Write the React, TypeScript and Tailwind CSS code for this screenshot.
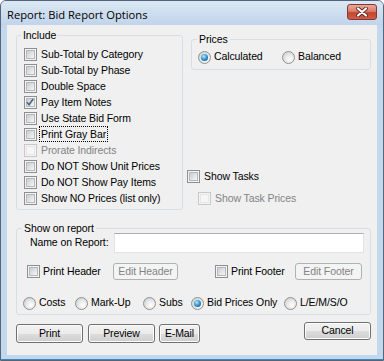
import type { ReactNode } from 'react';

function CheckBox({ checked, disabled }: { checked?: boolean; disabled?: boolean }) {
  return (
    <span
      className={`relative flex h-[13px] w-[13px] shrink-0 items-center justify-center border p-[1px] ${
        disabled ? 'border-[#c6c8ca] bg-[#f4f4f4]' : 'border-[#8e8f8f] bg-[#f4f4f4]'
      }`}
    >
      <span
        className={`h-[9px] w-[9px] border ${
          disabled
            ? 'border-[#e6e6e6] bg-[#f6f6f6]'
            : 'border-[#b4b8bd] bg-gradient-to-br from-[#c9cdd2] to-[#f6f6f6]'
        }`}
      />
      {checked && (
        <svg viewBox="0 0 13 13" className="absolute top-0 left-0 h-[11px] w-[11px]">
          <path d="M2.3 6.3 L4.8 9.2 L9.6 2.4" fill="none" stroke="#4b5f86" strokeWidth="1.8" />
        </svg>
      )}
    </span>
  );
}

function Radio({ checked }: { checked?: boolean }) {
  return (
    <span className="flex h-[13px] w-[13px] shrink-0 items-center justify-center rounded-full border border-[#8f9193] bg-[radial-gradient(circle_at_62%_65%,#ffffff_0%,#e8e8e8_45%,#c3c6ca_100%)]">
      {checked && (
        <span className="h-[7px] w-[7px] rounded-full bg-[radial-gradient(circle_at_40%_35%,#b9ecff_0%,#3a9ad6_45%,#0d3f6e_100%)]" />
      )}
    </span>
  );
}

function Check({
  label,
  checked,
  disabled,
  focus,
  className = '',
}: {
  label: string;
  checked?: boolean;
  disabled?: boolean;
  focus?: boolean;
  className?: string;
}) {
  return (
    <div className={`flex h-[16px] items-center ${className}`}>
      <CheckBox checked={checked} disabled={disabled} />
      <span
        className={`ml-[2px] whitespace-nowrap border px-[1px] leading-[14px] ${
          focus ? 'border-dotted border-black' : 'border-transparent'
        } ${disabled ? 'text-[#838383]' : ''}`}
      >
        {label}
      </span>
    </div>
  );
}

function Opt({ label, checked, className = '' }: { label: string; checked?: boolean; className?: string }) {
  return (
    <div className={`flex h-[16px] shrink-0 items-center ${className}`}>
      <Radio checked={checked} />
      <span className="ml-[3px] whitespace-nowrap">{label}</span>
    </div>
  );
}

function Button({
  children,
  disabled,
  className = '',
}: {
  children: ReactNode;
  disabled?: boolean;
  className?: string;
}) {
  return (
    <div
      className={`flex shrink-0 items-center justify-center rounded-[3px] border ${
        disabled
          ? 'border-[#adb2b5] bg-[#f4f4f4] text-[#838383]'
          : 'border-[#707070] bg-[linear-gradient(to_bottom,#f2f2f2_0%,#ebebeb_50%,#dddddd_50%,#cfcfcf_100%)] shadow-[inset_0_0_0_1px_#fcfcfc]'
      } ${className}`}
    >
      {children}
    </div>
  );
}

function Group({
  title,
  legendClass,
  className,
  children,
}: {
  title: string;
  legendClass: string;
  className: string;
  children: ReactNode;
}) {
  return (
    <fieldset className={`shrink-0 rounded-[3px] border border-[#d5dfe5] ${className}`}>
      <legend className={`px-[2px] leading-[13px] ${legendClass}`}>{title}</legend>
      {children}
    </fieldset>
  );
}

export default function App() {
  return (
    <div className="h-[361px] w-[384px] bg-white font-[family-name:Liberation_Sans,Arial,sans-serif] text-[10.5px] tracking-[-0.1px] text-black">
      <div className="flex h-[361px] w-[384px] flex-col rounded-t-[6px] border border-[#52657b] bg-[#c4d8ed]">
        {/* title bar */}
        <div className="flex h-[24px] shrink-0 items-start rounded-t-[5px] bg-gradient-to-b from-[#dce8f5] to-[#c0d4ea] pr-[6px] pl-[6px]">
          <span className="mt-[6px] font-[family-name:Open_Sans,Noto_Sans,sans-serif] text-[11.2px] leading-[16px] tracking-normal whitespace-nowrap">
            Report: Bid Report Options
          </span>
          <div className="mt-[3px] ml-auto flex h-[16px] w-[30px] items-center justify-center rounded-[3px] border border-[#86372f] bg-[linear-gradient(to_bottom,#eaa99b_0%,#d97e6c_45%,#c6462f_55%,#cf5d47_100%)]">
            <svg viewBox="0 0 14 10" className="h-[10px] w-[14px]">
              <path d="M3 1.5 L11 8.5 M11 1.5 L3 8.5" stroke="#5a2620" strokeWidth="3.8" strokeLinecap="round" />
              <path d="M3 1.5 L11 8.5 M11 1.5 L3 8.5" stroke="#ffffff" strokeWidth="2.2" strokeLinecap="round" />
            </svg>
          </div>
        </div>

        <div className="flex shrink-0 px-[6px]">
          {/* client */}
          <div className="h-[330px] w-[370px] bg-[#f0f0f0] pt-[4px]">
            <div className="flex">
              <Group
                title="Include"
                legendClass="-ml-[3px]"
                className="ml-[9px] h-[181px] w-[167px] pt-[4px] pl-[7px]"
              >
                <Check label="Sub-Total by Category" />
                <Check label="Sub-Total by Phase" />
                <Check label="Double Space" />
                <Check label="Pay Item Notes" checked />
                <Check label="Use State Bid Form" />
                <Check label="Print Gray Bar" focus />
                <Check label="Prorate Indirects" disabled />
                <Check label="Do NOT Show Unit Prices" />
                <Check label="Do NOT Show Pay Items" />
                <Check label="Show NO Prices (list only)" />
              </Group>

              <div className="ml-[4px] flex flex-col">
                <Group
                  title="Prices"
                  legendClass="-ml-[1px]"
                  className="mt-[4px] ml-[4px] h-[37px] w-[180px] pt-[3px] pl-[6px]"
                >
                  <div className="flex">
                    <Opt label="Calculated" checked className="w-[84px]" />
                    <Opt label="Balanced" />
                  </div>
                </Group>
                <Check label="Show Tasks" className="mt-[98px]" />
                <Check label="Show Task Prices" disabled className="mt-[6px] ml-[11px]" />
              </div>
            </div>

            <Group
              title="Show on report"
              legendClass="ml-[5px]"
              className="mt-[12px] ml-[9px] h-[93px] w-[355px]"
            >
              <div className="-mt-[2px] flex h-[20px] items-center">
                <span className="ml-[13px] w-[84px] whitespace-nowrap">Name on Report:</span>
                <div className="h-[20px] w-[250px] border border-[#e2e3ea] border-t-[#abadb3] bg-white" />
              </div>
              <div className="mt-[10px] flex h-[17px] items-center">
                <div className="ml-[10px] flex w-[86px] items-center">
                  <CheckBox />
                  <span className="ml-[3px] whitespace-nowrap">Print Header</span>
                </div>
                <Button disabled className="h-[17px] w-[65px]">
                  Edit Header
                </Button>
                <div className="ml-[37px] flex w-[80px] items-center">
                  <CheckBox />
                  <span className="ml-[3px] whitespace-nowrap">Print Footer</span>
                </div>
                <Button disabled className="h-[17px] w-[67px]">
                  Edit Footer
                </Button>
              </div>
              <div className="mt-[15px] flex h-[16px] items-center pl-[6px]">
                <Opt label="Costs" className="w-[52px]" />
                <Opt label="Mark-Up" className="w-[68px]" />
                <Opt label="Subs" className="w-[48px]" />
                <Opt label="Bid Prices Only" checked className="w-[93px]" />
                <Opt label="L/E/M/S/O" />
              </div>
            </Group>

            <div className="mt-[9px] ml-[9px] flex w-[355px] items-start">
              <Button className="h-[19px] w-[67px]">Print</Button>
              <Button className="ml-[5px] h-[19px] w-[67px]">Preview</Button>
              <Button className="ml-[4px] h-[19px] w-[41px]">E-Mail</Button>
              <Button className="-mt-[2px] ml-auto h-[18px] w-[67px]">Cancel</Button>
            </div>
          </div>
        </div>

        <div className="flex-1 border-b border-[#3f86b8]" />
      </div>
    </div>
  );
}
